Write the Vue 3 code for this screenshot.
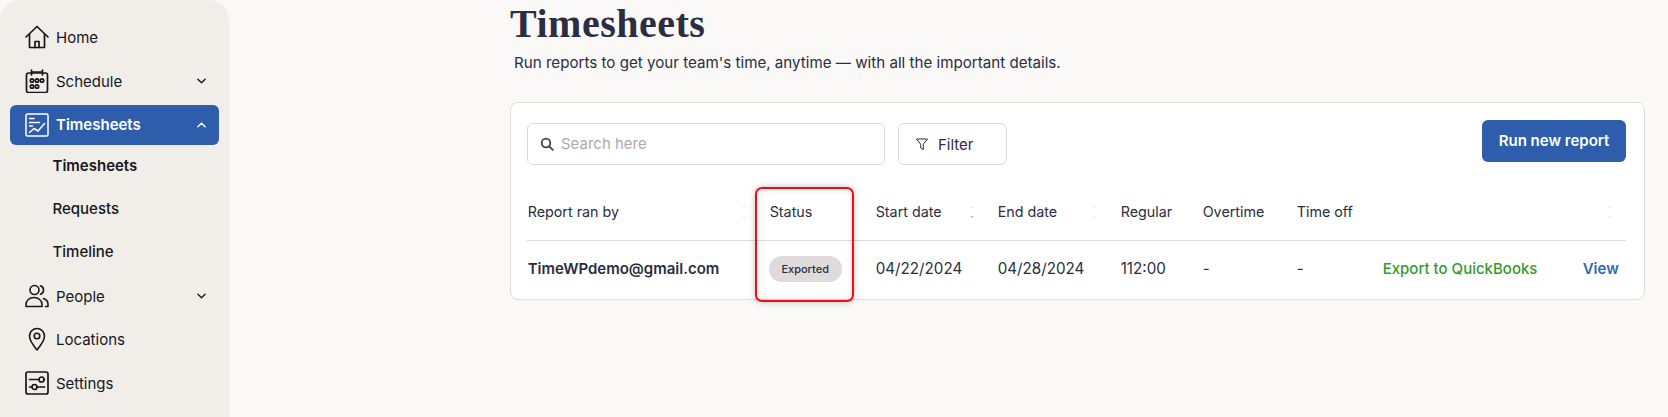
<script setup>
const columns = [
  { label: "Report ran by", width: 242, sort: true },
  { label: "Status", width: 106 },
  { label: "Start date", width: 122, sort: true, dark: true },
  { label: "End date", width: 123, sort: true },
  { label: "Regular", width: 82 },
  { label: "Overtime", width: 94 },
  { label: "Time off", width: 86 },
  { label: "", width: 200 },
  { label: "", width: 44, sort: true, last: true },
];
</script>

<template>
  <div class="page">
    <aside class="sidebar">
      <nav class="nav">
        <a class="nav-item">
          <svg class="nav-icon" viewBox="0 0 24 24" fill="none" stroke="currentColor" stroke-width="1.7" stroke-linejoin="round" stroke-linecap="round">
            <path d="M1 12 12 1.500 23 12" />
            <path d="M4.500 9v13.500h15V9" />
            <path d="M10 22.500v-6h4v6" />
          </svg>
          <span>Home</span>
        </a>
        <a class="nav-item has-caret">
          <svg class="nav-icon" viewBox="0 0 24 24" fill="none" stroke="currentColor" stroke-width="1.7" stroke-linecap="round">
            <rect x="1.500" y="4" width="21" height="19.500" rx="2" />
            <path d="M6.500 1v5M17.500 1v5M6.500 3h11" />
            <circle cx="7" cy="11.500" r="1.700" />
            <circle cx="12" cy="11.500" r="1.700" />
            <circle cx="17" cy="11.500" r="1.700" />
            <circle cx="7" cy="17.500" r="1.700" />
            <circle cx="12" cy="17.500" r="1.700" />
          </svg>
          <span>Schedule</span>
          <svg class="caret" viewBox="0 0 10 6" fill="none" stroke="currentColor" stroke-width="1.500" stroke-linecap="round" stroke-linejoin="round"><path d="M1 1l4 4 4-4" /></svg>
        </a>
        <a class="nav-item has-caret active">
          <svg class="nav-icon" viewBox="0 0 24 24" fill="none" stroke="currentColor" stroke-width="1.500" stroke-linecap="round" stroke-linejoin="round">
            <rect x="1" y="1" width="22" height="22" rx="1.500" />
            <path d="M4.500 5.500h4.500M4.500 9.500h10M4.500 13h3" />
            <path d="M4.500 19.500 9 15.500l4 2.500 6.500-7.500" />
          </svg>
          <span>Timesheets</span>
          <svg class="caret" viewBox="0 0 10 6" fill="none" stroke="currentColor" stroke-width="1.500" stroke-linecap="round" stroke-linejoin="round"><path d="M1 5l4-4 4 4" /></svg>
        </a>
        <a class="sub-item current">Timesheets</a>
        <a class="sub-item">Requests</a>
        <a class="sub-item">Timeline</a>
        <a class="nav-item has-caret">
          <svg class="nav-icon" viewBox="0 0 24 24" fill="none" stroke="currentColor" stroke-width="1.600" stroke-linecap="round" stroke-linejoin="round">
            <circle cx="9.500" cy="6" r="4.500" />
            <path d="M1 22.500v-2c0-4 3.500-7 8-7s8 3 8 7v2H1z" />
            <path d="M15.500 1.800a4.500 4.500 0 0 1 0 8.500" />
            <path d="M18.500 14.500c2.800 1 4.500 3.200 4.500 5.800v2.200h-2.500" />
          </svg>
          <span>People</span>
          <svg class="caret" viewBox="0 0 10 6" fill="none" stroke="currentColor" stroke-width="1.500" stroke-linecap="round" stroke-linejoin="round"><path d="M1 1l4 4 4-4" /></svg>
        </a>
        <a class="nav-item locations">
          <svg class="nav-icon" viewBox="0 0 24 24" fill="none" stroke="currentColor" stroke-width="1.600" stroke-linejoin="round">
            <path d="M12 23C7.500 17.500 4.500 13.500 4.500 9a7.500 7.500 0 0 1 15 0c0 4.500-3 8.500-7.500 14z" />
            <circle cx="12" cy="9" r="2.800" />
          </svg>
          <span>Locations</span>
        </a>
        <a class="nav-item">
          <svg class="nav-icon" viewBox="0 0 24 24" fill="none" stroke="currentColor" stroke-width="1.700" stroke-linecap="round">
            <rect x="1" y="1" width="22" height="22" rx="2" />
            <path d="M4.500 8.500h9.500M19 8.500h.500M4.500 16h2.500M12 16h7.500" />
            <circle cx="16.500" cy="8.500" r="2.500" />
            <circle cx="9.500" cy="16" r="2.500" />
          </svg>
          <span>Settings</span>
        </a>
      </nav>
    </aside>

    <main class="main">
      <h1 class="title">Timesheets</h1>
      <p class="subtitle">Run reports to get your team's time, anytime — with all the important details.</p>

      <section class="card">
        <div class="toolbar">
          <label class="search">
            <svg class="search-icon" viewBox="0 0 14 14" fill="none" stroke="currentColor" stroke-width="1.800" stroke-linecap="round">
              <circle cx="6" cy="6" r="4.300" />
              <path d="M9.300 9.300 12.800 12.800" />
            </svg>
            <input type="text" placeholder="Search here" />
          </label>
          <button class="filter" type="button">
            <svg class="filter-icon" viewBox="0 0 14 14" fill="none" stroke="currentColor" stroke-width="1" stroke-linejoin="round">
              <path d="M1.500 2h11L8.300 7.300V12.500L5.700 11V7.300z" />
            </svg>
            Filter
          </button>
          <button class="run" type="button">Run new report</button>
        </div>

        <table class="table">
          <colgroup>
            <col v-for="(col, i) in columns" :key="i" :style="{ width: col.width + 'px' }" />
          </colgroup>
          <thead>
            <tr>
              <th v-for="(col, i) in columns" :key="i">
                {{ col.label }}
                <svg v-if="col.sort" class="sort" :class="{ last: col.last }" viewBox="0 0 6 14">
                  <path d="M3 1l2 2H1z" fill="#f1efef" />
                  <path d="M3 13l2-2H1z" :fill="col.dark ? '#c4bfbf' : '#f1efef'" />
                </svg>
              </th>
            </tr>
          </thead>
          <tbody>
            <tr>
              <td class="email">TimeWPdemo@gmail.com</td>
              <td><span class="badge">Exported</span></td>
              <td class="num">04/22/2024</td>
              <td class="num">04/28/2024</td>
              <td class="num">112:00</td>
              <td>-</td>
              <td>-</td>
              <td><a class="export">Export to QuickBooks</a></td>
              <td><a class="view">View</a></td>
            </tr>
          </tbody>
        </table>

        <div class="highlight"></div>
      </section>
    </main>
  </div>
</template>

<style>
html,
body {
  margin: 0;
  background: #fbf9f8;
}
</style>

<style scoped>
.page {
  display: flex;
  height: 417px;
  overflow: hidden;
  font-family: Inter, "Liberation Sans", sans-serif;
  color: #2b2d42;
}

.sidebar {
  width: 229px;
  flex: none;
  background: #f1eeea;
  border-radius: 20px 20px 0 0;
  padding: 15px 10px 0;
  box-sizing: border-box;
}

.nav {
  display: flex;
  flex-direction: column;
}

.nav-item {
  height: 44px;
  display: flex;
  align-items: center;
  gap: 7px;
  padding: 0 15px;
  font-size: 15px;
  color: #16161d;
  border-radius: 6px;
}

.nav-item.active {
  height: 40px;
  margin-top: 2px;
  background: #2d5dab;
  color: #fff;
  font-weight: 600;
}

.nav-item.active span {
  margin-bottom: 2px;
}

.nav-item.locations {
  margin-top: -1px;
}

.nav-icon {
  width: 24px;
  height: 24px;
  flex: none;
}

.caret {
  width: 9px;
  height: 6px;
  margin-left: auto;
  margin-right: -2px;
}

.sub-item {
  height: 43px;
  box-sizing: border-box;
  display: flex;
  align-items: center;
  padding: 0 0 2px 42.5px;
  font-size: 15px;
  font-weight: 500;
  color: #16161d;
}

.sub-item.current {
  font-weight: 600;
}

.main {
  flex: 1;
  padding: 1px 23px 0 281px;
  min-width: 0;
}

.title {
  margin: 0;
  font-family: "Liberation Serif", serif;
  font-size: 40px;
  line-height: 46px;
  font-weight: 700;
  letter-spacing: 0.5px;
  color: #2b2d42;
}

.subtitle {
  margin: 6px 0 0 4px;
  font-size: 15.15px;
  line-height: 20px;
  color: #2b2d42;
}

.card {
  position: relative;
  margin-top: 29px;
  height: 198px;
  box-sizing: border-box;
  background: #fff;
  border: 1px solid #e0dcdc;
  border-radius: 8px;
  padding: 17px 16px 0;
}

.toolbar {
  display: flex;
  align-items: flex-start;
  gap: 13px;
}

.search {
  width: 358px;
  height: 42px;
  margin-top: 3px;
  box-sizing: border-box;
  display: flex;
  align-items: center;
  gap: 7px;
  padding: 0 12px;
  border: 1px solid #dedada;
  border-radius: 6px;
}

.search-icon {
  width: 14px;
  height: 14px;
  flex: none;
  color: #4a3f3f;
}

.search input {
  flex: 1;
  min-width: 0;
  border: 0;
  outline: 0;
  padding: 0 0 1px;
  font: 15px Inter, "Liberation Sans", sans-serif;
  color: #2b2d42;
}

.search input::placeholder {
  color: #b3a8a8;
  opacity: 1;
}

.filter {
  width: 109px;
  height: 42px;
  margin-top: 3px;
  display: flex;
  align-items: center;
  gap: 9px;
  padding: 0 16px;
  box-sizing: border-box;
  background: #fff;
  border: 1px solid #dedada;
  border-radius: 6px;
  font: 15px Inter, "Liberation Sans", sans-serif;
  color: #2b2d42;
}

.filter-icon {
  width: 14px;
  height: 14px;
  flex: none;
}

.run {
  width: 144px;
  height: 42px;
  margin-left: auto;
  margin-right: 2px;
  padding: 0 0 2px;
  background: #2d5dab;
  border: 0;
  border-radius: 6px;
  color: #fff;
  font: 600 15px Inter, "Liberation Sans", sans-serif;
}

.table {
  width: 1099px;
  margin-top: 19px;
  border-collapse: collapse;
  table-layout: fixed;
}

th {
  position: relative;
  height: 56px;
  box-sizing: border-box;
  padding: 0 0 0 0.7px;
  text-align: left;
  font-size: 14.3px;
  font-weight: 400;
  border-bottom: 1px solid #dedada;
}

.sort {
  position: absolute;
  right: 22px;
  top: 21px;
  width: 6px;
  height: 14px;
}

.sort.last {
  right: 13px;
}

td {
  height: 56px;
  padding: 0 0 0 0.7px;
  font-size: 15px;
}

td.num {
  font-size: 15.2px;
}

.email {
  font-weight: 600;
}

.badge {
  display: inline-block;
  width: 73px;
  height: 26px;
  margin-left: -1px;
  line-height: 26px;
  text-align: center;
  border-radius: 13px;
  background: #dfdadb;
  font-size: 11px;
  font-weight: 500;
}

.export {
  color: #359a2c;
  font-weight: 500;
}

.view {
  color: #2a6cb8;
  font-weight: 600;
}

.highlight {
  position: absolute;
  left: 244px;
  top: 84px;
  width: 99px;
  height: 115px;
  box-sizing: border-box;
  border: 2px solid #ee0d14;
  border-radius: 7px;
  box-shadow: 0 0 6px rgba(0, 0, 0, 0.25), inset 0 0 6px rgba(0, 0, 0, 0.15);
  pointer-events: none;
}
</style>
